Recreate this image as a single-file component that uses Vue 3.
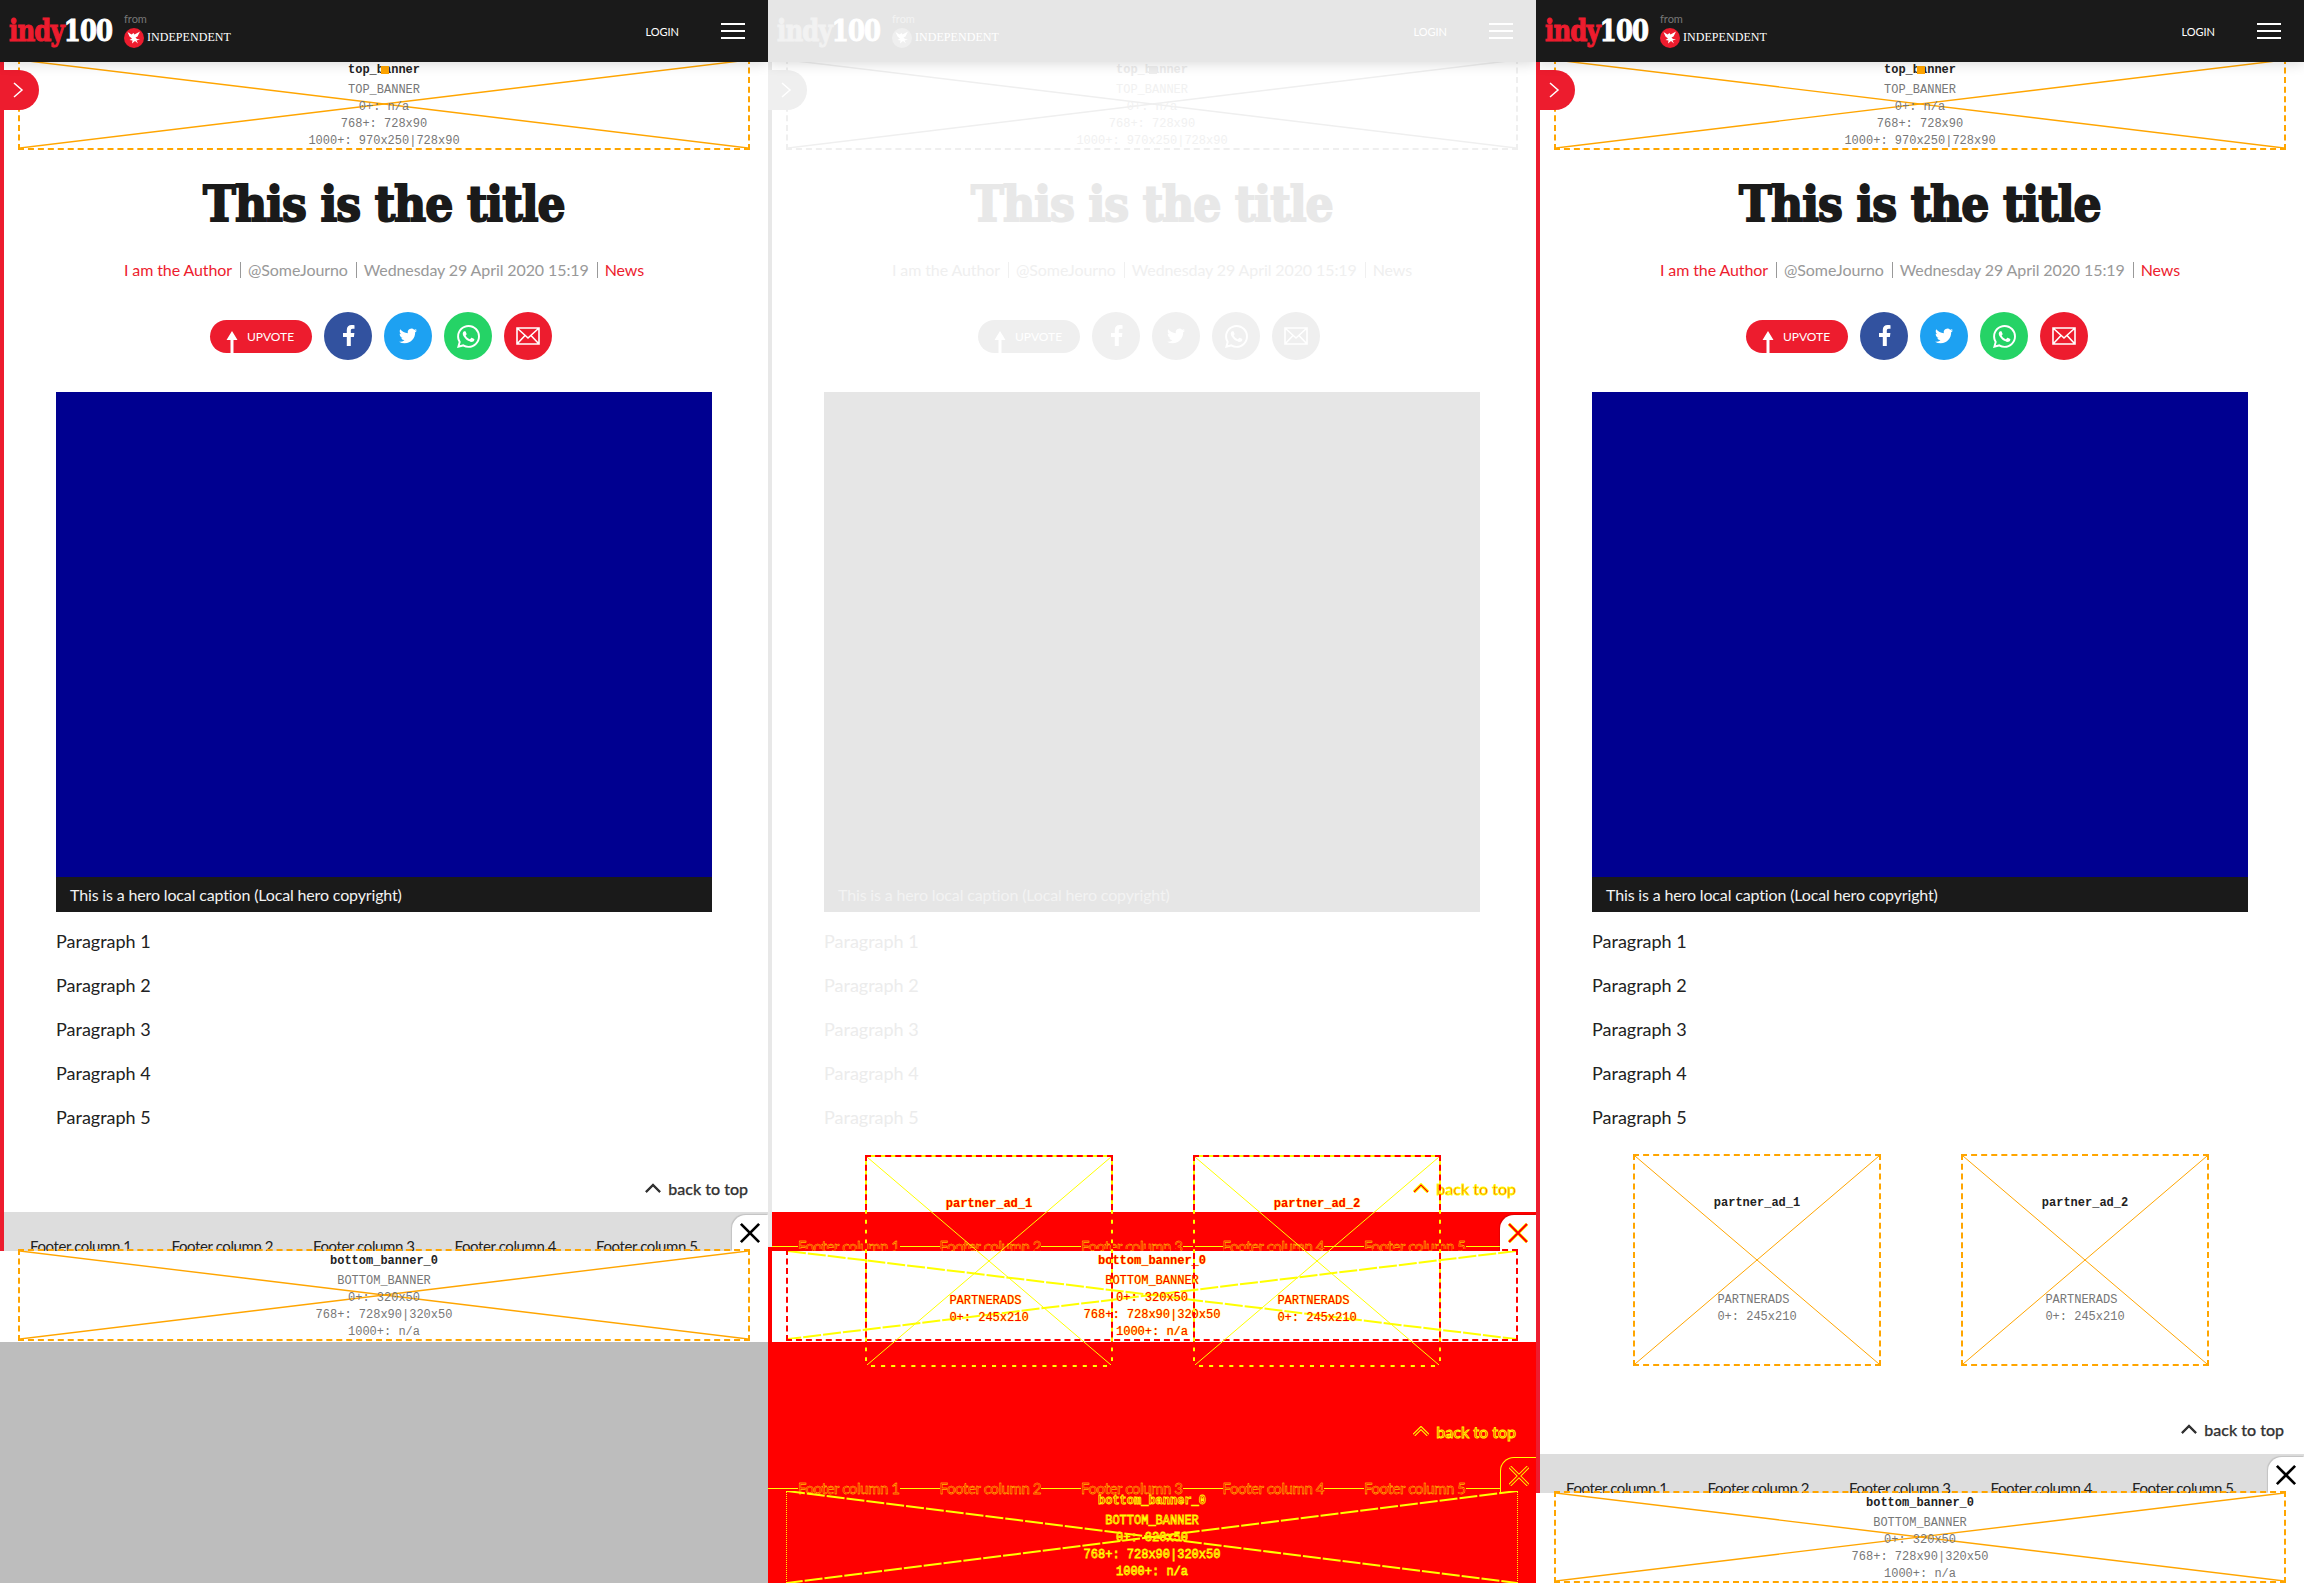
<script setup>
const panels = [
  { kind: 'before', height: 1342, banners: [{ top: 1251, height: 91 }] },
  { kind: 'diff', height: 1583, banners: [{ top: 1251, height: 91 }, { top: 1493, height: 90, ghost: true }] },
  { kind: 'after', height: 1583, banners: [{ top: 1493, height: 90 }] },
];

const topLines = ['TOP_BANNER', '0+: n/a', '768+: 728x90', '1000+: 970x250|728x90'];
const bottomLines = ['BOTTOM_BANNER', '0+: 320x50', '768+: 728x90|320x50', '1000+: n/a'];
const partnerAds = ['partner_ad_1', 'partner_ad_2'];
const paragraphs = ['Paragraph 1', 'Paragraph 2', 'Paragraph 3', 'Paragraph 4', 'Paragraph 5'];
const footerColumns = ['Footer column 1', 'Footer column 2', 'Footer column 3', 'Footer column 4', 'Footer column 5'];
</script>

<template>
  <div class="shots">
    <section v-for="p in panels" :key="p.kind" class="shot" :class="p.kind">
      <div class="viewport" :style="{ height: p.height + 'px' }">
        <div class="edge"></div>

        <button class="side-tab">
          <svg width="12" height="16" viewBox="0 0 12 16"><path d="M2 1l8 7-8 7" fill="none" stroke="#fff" stroke-width="1.5" /></svg>
        </button>

        <div class="page">
          <header class="topbar">
            <div class="logo"><span class="indy">indy</span><span class="hundred">100</span></div>
            <div class="from">
              <span class="from-label">from</span>
              <div class="publisher">
                <svg class="eagle" width="20" height="20" viewBox="0 0 20 20">
                  <circle cx="10" cy="10" r="10" class="eagle-disc" />
                  <path d="M3.5 4l4 2.5 2-1.5 1 1.5 5.5-3-2.5 5-2 1 1.5 1.5 3 .5-3.5 1 1.5 3-3-2.500-3 2.500.5-3-3-.5 2.500-1.500-2.500-2z" fill="#fff" />
                </svg>
                <span class="publisher-name">INDEPENDENT</span>
              </div>
            </div>
            <span class="login">LOGIN</span>
            <div class="burger"><i></i><i></i><i></i></div>
          </header>

          <div class="ad ad-top">
            <svg class="cross" viewBox="0 0 100 100" preserveAspectRatio="none">
              <line x1="0" y1="0" x2="100" y2="100" vector-effect="non-scaling-stroke" />
              <line x1="100" y1="0" x2="0" y2="100" vector-effect="non-scaling-stroke" />
            </svg>
            <div class="ad-name">top_banner</div>
            <div v-for="line in topLines" :key="line" class="ad-line">{{ line }}</div>
            <span class="ad-mark"></span>
          </div>

          <h1 class="title"><span>This is the title</span></h1>

          <div class="meta">
            <span class="meta-red">I am the Author</span>
            <span>@SomeJourno</span>
            <span>Wednesday 29 April 2020 15:19</span>
            <span class="meta-red">News</span>
          </div>

          <div class="share">
            <button class="upvote">
              <svg width="12" height="22" viewBox="0 0 12 22"><path d="M6 0l5.500 9H7.500v13h-3V9H.5z" fill="#fff" /></svg>
              <span>UPVOTE</span>
            </button>
            <span class="round fb">
              <svg width="48" height="48" viewBox="0 0 48 48"><path d="M26.800 34v-9h3.100l.5-4h-3.600v-2.400c0-1.100.4-1.900 1.900-1.900h1.800v-3.400c-.4 0-1.500-.2-2.900-.2-2.900 0-4.800 1.800-4.800 5v2.900H19v4h3.800v9z" fill="#fff" /></svg>
            </span>
            <span class="round tw">
              <svg width="18" height="18" viewBox="0 0 24 24"><path d="M23.953 4.570a10 10 0 01-2.825.775 4.958 4.958 0 002.163-2.723c-.951.555-2.005.959-3.127 1.184a4.920 4.920 0 00-8.384 4.482C7.690 8.095 4.067 6.130 1.640 3.162a4.822 4.822 0 00-.666 2.475c0 1.710.870 3.213 2.188 4.096a4.904 4.904 0 01-2.228-.616v.060a4.923 4.923 0 003.946 4.827 4.996 4.996 0 01-2.212.085 4.936 4.936 0 004.604 3.417 9.867 9.867 0 01-6.102 2.105c-.390 0-.779-.023-1.170-.067a13.995 13.995 0 007.557 2.209c9.053 0 13.998-7.496 13.998-13.985 0-.210 0-.420-.015-.630A9.935 9.935 0 0024 4.590z" fill="#fff" /></svg>
            </span>
            <span class="round wa">
              <svg width="23" height="23" viewBox="0 0 24 24"><path d="M17.472 14.382c-.297-.149-1.758-.867-2.030-.967-.273-.099-.471-.148-.670.150-.197.297-.767.966-.940 1.164-.173.199-.347.223-.644.075-.297-.150-1.255-.463-2.390-1.475-.883-.788-1.480-1.761-1.653-2.059-.173-.297-.018-.458.130-.606.134-.133.298-.347.446-.520.149-.174.198-.298.298-.497.099-.198.050-.371-.025-.520-.075-.149-.669-1.612-.916-2.207-.242-.579-.487-.500-.669-.510-.173-.008-.371-.010-.570-.010-.198 0-.520.074-.792.372-.272.297-1.040 1.016-1.040 2.479 0 1.462 1.065 2.875 1.213 3.074.149.198 2.096 3.200 5.077 4.487.709.306 1.262.489 1.694.625.712.227 1.360.195 1.871.118.571-.085 1.758-.719 2.006-1.413.248-.694.248-1.289.173-1.413-.074-.124-.272-.198-.570-.347m-5.421 7.403h-.004a9.870 9.870 0 01-5.031-1.378l-.361-.214-3.741.982.998-3.648-.235-.374a9.860 9.860 0 01-1.510-5.260c.001-5.450 4.436-9.884 9.888-9.884 2.640 0 5.122 1.030 6.988 2.898a9.825 9.825 0 012.893 6.994c-.003 5.450-4.437 9.884-9.885 9.884m8.413-18.297A11.815 11.815 0 0012.050 0C5.495 0 .160 5.335.157 11.892c0 2.096.547 4.142 1.588 5.945L.057 24l6.305-1.654a11.882 11.882 0 005.683 1.448h.005c6.554 0 11.890-5.335 11.893-11.893a11.821 11.821 0 00-3.480-8.413z" fill="#fff" /></svg>
            </span>
            <span class="round em">
              <svg width="24" height="18" viewBox="0 0 24 18"><path d="M1 1h22v16H1zM1 1l11 10L23 1M1 17l8-8.500M23 17l-8-8.500" fill="none" stroke="#fff" stroke-width="1.600" /></svg>
            </span>
          </div>

          <figure class="hero">
            <div class="hero-image"></div>
            <figcaption>This is a hero local caption (Local hero copyright)</figcaption>
          </figure>

          <div class="body">
            <p v-for="text in paragraphs" :key="text">{{ text }}</p>
          </div>

          <div v-if="p.kind !== 'before'" class="partners">
            <div v-for="name in partnerAds" :key="name" class="ad ad-partner">
              <svg class="cross" viewBox="0 0 100 100" preserveAspectRatio="none">
                <line x1="0" y1="0" x2="100" y2="100" vector-effect="non-scaling-stroke" />
                <line x1="100" y1="0" x2="0" y2="100" vector-effect="non-scaling-stroke" />
              </svg>
              <div class="ad-name partner-name">{{ name }}</div>
              <div class="ad-line">PARTNERADS&nbsp;</div>
              <div class="ad-line">0+: 245x210</div>
            </div>
          </div>

          <div class="back-top" :class="{ 'first-pass': p.kind === 'diff' }">
            <svg width="16" height="10" viewBox="0 0 16 10">
              <path class="caret" d="M1 9l7-7 7 7" fill="none" />
              <path class="caret-core" d="M1 9l7-7 7 7" fill="none" />
            </svg>
            <span>back to top</span>
          </div>

          <footer class="site-footer">
            <i class="footer-line"></i>
            <span v-for="col in footerColumns" :key="col">{{ col }}</span>
          </footer>
        </div>

        <template v-if="p.kind === 'diff'">
          <div class="back-top ghost-top">
            <svg width="16" height="10" viewBox="0 0 16 10">
              <path class="caret" d="M1 9l7-7 7 7" fill="none" />
              <path class="caret-core" d="M1 9l7-7 7 7" fill="none" />
            </svg>
            <span>back to top</span>
          </div>
          <div class="site-footer ghost-footer">
            <i class="footer-line"></i>
            <span v-for="col in footerColumns" :key="col">{{ col }}</span>
          </div>
        </template>

        <div
          v-for="b in p.banners"
          :key="b.top"
          class="sticky-banner"
          :class="{ ghost: b.ghost }"
          :style="{ top: b.top + 'px', height: b.height + 'px' }"
        >
          <button class="close">
            <svg width="20" height="20" viewBox="0 0 20 20">
              <path class="x-outer" d="M1 1l18 18M19 1L1 19" fill="none" />
              <path class="x-core" d="M1 1l18 18M19 1L1 19" fill="none" />
            </svg>
          </button>
          <div class="ad ad-bottom">
            <svg class="cross" viewBox="0 0 100 100" preserveAspectRatio="none">
              <line x1="0" y1="0" x2="100" y2="100" vector-effect="non-scaling-stroke" />
              <line x1="100" y1="0" x2="0" y2="100" vector-effect="non-scaling-stroke" />
            </svg>
            <div class="ad-name">bottom_banner_0</div>
            <div v-for="line in bottomLines" :key="line" class="ad-line">{{ line }}</div>
          </div>
        </div>
      </div>
    </section>
  </div>
</template>

<style>
html, body {
  margin: 0;
  background: #fff;
}
</style>

<style scoped>
.shots {
  display: flex;
  width: 2304px;
  height: 1583px;
  overflow: hidden;
  font-family: Lato, "Liberation Sans", sans-serif;
}

.shot {
  --ink: #1a1a1a;
  --red: #ed1c2e;
  --edge: #ed1c2e;
  --muted: #999;
  --bar: #1a1a1a;
  --hero: #000090;
  --ad: #ffa500;
  --ad-name: #222;
  --ad-text: #777;
  --logo-indy: #ed1c2e;
  --from: #777;
  --body: #222;
  --band: #ddd;
  --share-fb: #32529f;
  --share-tw: #1da1f2;
  --share-wa: #25d366;
  --caption: #f2f2f2;
  width: 768px;
  height: 1583px;
  flex: none;
  background: #bdbdbd;
}

.shot.diff {
  --ink: #e8e8e8;
  --red: #efefef;
  --edge: #e8e8e8;
  --muted: #f0f0f0;
  --bar: #e6e6e6;
  --hero: #e6e6e6;
  --ad: #efefef;
  --ad-name: #ececec;
  --ad-text: #f1f1f1;
  --logo-indy: #f2f2f2;
  --from: #f3f3f3;
  --body: #ececec;
  --band: #ff0000;
  --share-fb: #f0f0f0;
  --share-tw: #f0f0f0;
  --share-wa: #f0f0f0;
  --caption: #f3f3f3;
  background: #f00;
}

.viewport {
  position: relative;
  overflow: hidden;
  background: #fff;
}

.diff .viewport {
  background: #f00;
}

.edge {
  position: absolute;
  left: 0;
  top: 0;
  bottom: 0;
  width: 4px;
  background: var(--edge);
  z-index: 2;
}

.diff .edge {
  bottom: auto;
  height: 1247px;
}

.side-tab {
  position: absolute;
  left: 0;
  top: 70px;
  width: 39px;
  height: 40px;
  padding: 0 0 0 12px;
  border: 0;
  border-radius: 0 20px 20px 0;
  background: var(--red);
  display: flex;
  align-items: center;
  z-index: 3;
}

.page {
  display: flex;
  flex-direction: column;
  min-height: 100%;
  height: 100%;
  background: #fff;
}

.topbar {
  position: relative;
  z-index: 5;
  flex: none;
  display: flex;
  align-items: center;
  height: 62px;
  padding: 0 23px 0 9px;
  background: var(--bar);
  box-shadow: 0 2px 12px rgba(0, 0, 0, 0.14);
  color: #fff;
}

.logo {
  width: 115px;
  font-family: "DejaVu Serif", serif;
  font-size: 29px;
  font-weight: 700;
  line-height: 30px;
  letter-spacing: -1px;
  white-space: nowrap;
  transform: scaleX(0.84);
  transform-origin: 0 50%;
  -webkit-text-stroke: 1.1px currentColor;
}

.indy {
  color: var(--logo-indy);
}

.hundred {
  color: #fff;
}

.from {
  display: flex;
  flex-direction: column;
  height: 36px;
  margin-top: -1px;
}

.from-label {
  font-size: 11px;
  line-height: 12px;
  color: var(--from);
}

.publisher {
  display: flex;
  align-items: center;
  gap: 3px;
  margin-top: 3px;
}

.eagle-disc {
  fill: var(--red);
}

.publisher-name {
  font-family: "Liberation Serif", serif;
  font-size: 12px;
  color: #fff;
  letter-spacing: 0.05px;
}

.login {
  margin-left: auto;
  margin-right: 42px;
  font-size: 11px;
  color: #fff;
}

.burger {
  display: flex;
  flex-direction: column;
  gap: 5px;
  width: 24px;
}

.burger i {
  display: block;
  height: 2px;
  background: #fff;
}

.ad {
  position: relative;
  box-sizing: border-box;
  border: 2px dashed var(--ad);
  font-family: "Liberation Mono", monospace;
  font-size: 12px;
  line-height: 17px;
  text-align: center;
  white-space: nowrap;
}

.cross {
  position: absolute;
  inset: 0;
  width: 100%;
  height: 100%;
}

.cross line {
  stroke: var(--ad);
  stroke-width: 1.4;
}

.ad-partner .cross line {
  stroke-width: 1;
}

.ad-name,
.ad-line {
  position: relative;
}

.ad-name {
  color: var(--ad-name);
  font-weight: 700;
  margin-bottom: 3px;
}

.ad-line {
  color: var(--ad-text);
}

.ad-top {
  flex: none;
  width: 732px;
  height: 92px;
  margin: -4px 0 0 18px;
  padding-top: 2px;
}

.ad-mark {
  position: absolute;
  left: 361px;
  top: 6px;
  width: 8px;
  height: 8px;
  background: var(--ad);
}

.title {
  flex: none;
  margin: 24px 0 0;
  height: 60px;
  text-align: center;
  font-family: "DejaVu Serif", serif;
  font-size: 49px;
  font-weight: 700;
  line-height: 60px;
  letter-spacing: -1px;
  color: var(--ink);
}

.title span {
  display: inline-block;
  transform: scaleX(0.9);
  -webkit-text-stroke: 2px currentColor;
  white-space: nowrap;
}

.meta {
  flex: none;
  display: flex;
  justify-content: center;
  margin-top: 24px;
  font-size: 16px;
  line-height: 24px;
  letter-spacing: -0.1px;
  color: var(--muted);
}

.meta span {
  padding: 0 8px;
}

.meta span + span {
  background: linear-gradient(var(--muted), var(--muted)) left center / 1px 16px no-repeat;
}

.meta-red {
  color: var(--red);
}

.share {
  flex: none;
  display: flex;
  justify-content: center;
  align-items: center;
  gap: 12px;
  margin: 30px 6px 0 0;
}

.upvote {
  display: flex;
  align-items: flex-end;
  gap: 9px;
  box-sizing: border-box;
  width: 102px;
  height: 33px;
  padding: 0 0 0 16px;
  border: 0;
  border-radius: 17px;
  background: var(--red);
  color: #fff;
  font-family: inherit;
  font-size: 12px;
  overflow: hidden;
}

.upvote span {
  line-height: 18px;
  margin-bottom: 7px;
}

.round {
  display: flex;
  align-items: center;
  justify-content: center;
  width: 48px;
  height: 48px;
  border-radius: 50%;
}

.fb { background: var(--share-fb); }
.tw { background: var(--share-tw); }
.wa { background: var(--share-wa); }
.em { background: var(--red); }

.hero {
  flex: none;
  margin: 32px 0 0 56px;
  width: 656px;
}

.hero-image {
  height: 485px;
  background: var(--hero);
}

.hero figcaption {
  box-sizing: border-box;
  height: 35px;
  padding: 0 14px;
  background: var(--bar);
  color: var(--caption);
  font-size: 16px;
  line-height: 35px;
  letter-spacing: -0.15px;
}

.body {
  flex: none;
  margin: 16px 0 0 56px;
}

.body p {
  margin: 0 0 18px;
  font-size: 18px;
  line-height: 26px;
  color: var(--body);
}

.body p:last-child {
  margin-bottom: 0;
}

.partners {
  flex: none;
  display: flex;
  gap: 80px;
  margin: 24px 0 0 97px;
}

.diff .partners {
  position: absolute;
  left: 0;
  top: 1155px;
  margin: 0 0 0 97px;
  z-index: 6;
}

.ad-partner {
  display: flex;
  flex-direction: column;
  justify-content: center;
  width: 248px;
  height: 212px;
}

.partner-name {
  margin-bottom: 80px;
}

.back-top {
  flex: none;
  display: flex;
  justify-content: flex-end;
  align-items: center;
  gap: 7px;
  height: 24px;
  margin: 46px 20px 0 0;
  font-size: 16px;
  font-weight: 500;
  color: #333;
  -webkit-text-stroke: 0.25px #333;
}

.caret,
.caret-core {
  stroke: #333;
  stroke-width: 2;
}

.after .back-top {
  margin-top: 51px;
}

.site-footer {
  position: relative;
  flex: 1;
  display: grid;
  grid-template-columns: repeat(5, 141.5px);
  align-content: start;
  margin-top: 12px;
  padding: 22px 0 0 30px;
  background: var(--band);
  font-size: 15px;
  letter-spacing: -0.4px;
  line-height: 24px;
  color: #222;
}

.after .site-footer {
  margin-top: 13px;
}

.footer-line {
  display: none;
}

.sticky-banner {
  position: absolute;
  left: 0;
  right: 0;
  z-index: 4;
  background: #fff;
}

.diff .sticky-banner {
  left: 4px;
}

.ad-bottom {
  width: 732px;
  height: 92px;
  margin: -2px 0 0 18px;
  padding-top: 2px;
}

.diff .ad-bottom {
  margin-left: 14px;
}

.close {
  position: absolute;
  right: 0;
  top: -36px;
  display: flex;
  align-items: center;
  justify-content: center;
  width: 36px;
  height: 36px;
  padding: 0;
  border: 0;
  border-top-left-radius: 14px;
  background: #fff;
  box-shadow: -1px -1px 1px rgba(0, 0, 0, 0.12);
}

.x-outer,
.x-core {
  stroke: #000;
  stroke-width: 2.4;
}

/* diff panel: changed pixels are red with a yellow edge */
.diff .ad-partner {
  border-color: #f00;
  background:
    linear-gradient(#ff0, #ff0) 0 0 / 100% 2px no-repeat,
    linear-gradient(#ff0, #ff0) 0 100% / 100% 2px no-repeat,
    linear-gradient(#ff0, #ff0) 0 0 / 2px 100% no-repeat,
    linear-gradient(#ff0, #ff0) 100% 0 / 2px 100% no-repeat;
  background-origin: border-box;
}

.diff .ad-partner .cross line,
.diff .ad-bottom .cross line {
  stroke: #ff0;
}

.diff .ad-bottom .cross line {
  stroke-width: 2;
  stroke-dasharray: 18 2;
}

.diff .ad-partner .ad-name,
.diff .ad-partner .ad-line,
.diff .ad-bottom .ad-name,
.diff .ad-bottom .ad-line {
  color: #f00;
  text-shadow: 0 0 1px #ff0, 0 0 1px #ff0;
}

.diff .ad-bottom {
  border-color: #f00;
}

.first-pass,
.ghost-top {
  color: #f00;
  -webkit-text-stroke: 0.9px #ff0;
}

.first-pass .caret,
.ghost-top .caret {
  stroke: #ff0;
  stroke-width: 3.4;
}

.first-pass .caret-core,
.ghost-top .caret-core {
  stroke: #f00;
  stroke-width: 1.2;
}

.ghost-top {
  position: absolute;
  right: 0;
  top: 1419px;
  margin: 0 20px 0 0;
  z-index: 3;
}

.diff .site-footer {
  color: #f00;
  -webkit-text-stroke: 0.35px #ff0;
}

.diff .site-footer span {
  position: relative;
  justify-self: start;
  background: #f00;
}

.diff .footer-line {
  display: block;
  position: absolute;
  left: 0;
  right: 36px;
  top: 34px;
  height: 1px;
  background: #ff0;
}

.ghost-footer {
  position: absolute;
  left: 0;
  right: 0;
  top: 1454px;
  height: 39px;
  margin: 0;
  padding-top: 29px;
  line-height: 10px;
  overflow: hidden;
  z-index: 3;
}

.diff .ghost {
  background: transparent;
}

.diff .ghost .ad-bottom {
  border: 0;
  border-left: 1px dotted #ff0;
  border-right: 1px dotted #ff0;
  padding-top: 2px;
}

.diff .ghost .ad-name,
.diff .ghost .ad-line {
  -webkit-text-stroke: 0.8px #ff0;
  text-shadow: none;
}

.diff .x-outer {
  stroke: #ff0;
  stroke-width: 3.4;
}

.diff .x-core {
  stroke: #f00;
  stroke-width: 2.2;
}

.diff .ghost .close {
  background: transparent;
  box-shadow: none;
  border-top: 1px solid #ff0;
  border-left: 1px solid #ff0;
}

.diff .ghost .x-core {
  stroke-width: 1.6;
}
</style>
